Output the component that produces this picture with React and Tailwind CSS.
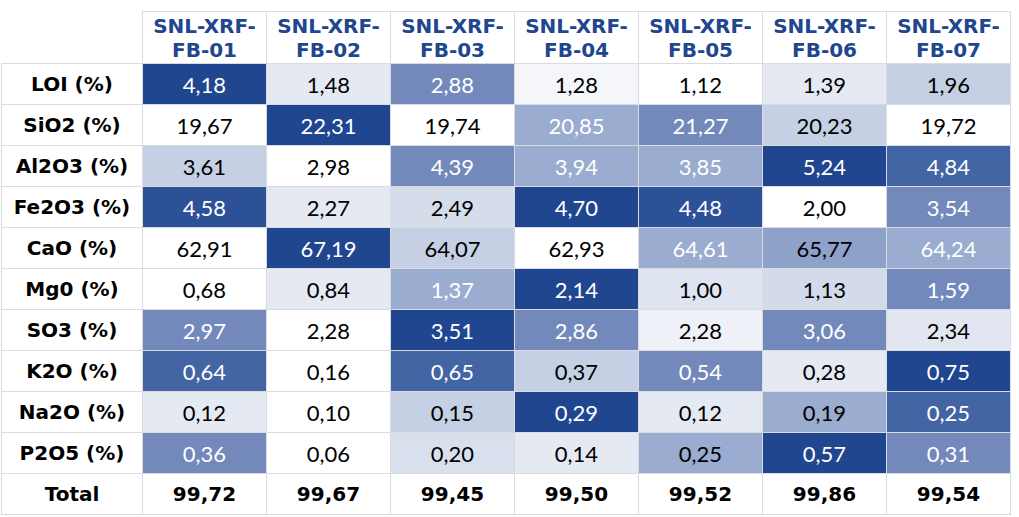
import React from 'react'

const D = 'bg-[#1f468f] text-white'
const DD = 'bg-[#2c5197] text-white'
const MD = 'bg-[#4465a4] text-white'
const M = 'bg-[#7389bb] text-white'
const MLw = 'bg-[#9aaccf] text-white'
const MLb = 'bg-[#9aaccf] text-black'
const L = 'bg-[#c5d0e4] text-black'
const VL = 'bg-[#e4e9f2] text-black'
const W = 'bg-white text-black'

const cols = ['01', '02', '03', '04', '05', '06', '07']

const rows = [
  ['LOI (%)', [['4,18', D], ['1,48', VL], ['2,88', M], ['1,28', 'bg-[#f4f6fa] text-black'], ['1,12', W], ['1,39', VL], ['1,96', L]]],
  ['SiO2 (%)', [['19,67', W], ['22,31', D], ['19,74', W], ['20,85', MLw], ['21,27', M], ['20,23', L], ['19,72', W]]],
  ['Al2O3 (%)', [['3,61', L], ['2,98', W], ['4,39', M], ['3,94', MLw], ['3,85', MLw], ['5,24', D], ['4,84', MD]]],
  ['Fe2O3 (%)', [['4,58', DD], ['2,27', VL], ['2,49', 'bg-[#d5dcea] text-black'], ['4,70', D], ['4,48', DD], ['2,00', W], ['3,54', M]]],
  ['CaO (%)', [['62,91', W], ['67,19', D], ['64,07', L], ['62,93', W], ['64,61', MLw], ['65,77', 'bg-[#8da1c9] text-black'], ['64,24', MLw]]],
  ['Mg0 (%)', [['0,68', W], ['0,84', VL], ['1,37', MLw], ['2,14', D], ['1,00', 'bg-[#dfe5f0] text-black'], ['1,13', 'bg-[#d3dbea] text-black'], ['1,59', M]]],
  ['SO3 (%)', [['2,97', M], ['2,28', W], ['3,51', D], ['2,86', M], ['2,28', 'bg-[#eef1f7] text-black'], ['3,06', M], ['2,34', 'bg-[#e1e6f0] text-black']]],
  ['K2O (%)', [['0,64', MD], ['0,16', W], ['0,65', MD], ['0,37', L], ['0,54', M], ['0,28', VL], ['0,75', D]]],
  ['Na2O (%)', [['0,12', VL], ['0,10', W], ['0,15', L], ['0,29', D], ['0,12', VL], ['0,19', MLb], ['0,25', MD]]],
  ['P2O5 (%)', [['0,36', M], ['0,06', W], ['0,20', 'bg-[#d9e0ed] text-black'], ['0,14', VL], ['0,25', MLb], ['0,57', D], ['0,31', M]]],
]

const totals = ['99,72', '99,67', '99,45', '99,50', '99,52', '99,86', '99,54']

const App = () => {
  return (
    <div className="w-[1019px] h-[517px] bg-white pt-[12px] pl-[1px]">
      <div className="grid grid-cols-[142px_repeat(7,124px)] grid-rows-[52px_repeat(11,41px)]">
        {/* Header */}
        <div />
        {cols.map((c) => (
          <div key={c} className="border border-[#d8dbe0] -ml-px -mt-px flex flex-col items-center justify-center text-[#1f468f] font-bold text-[20px] leading-[24px] font-['DejaVu_Sans',sans-serif]">
            <span>SNL-XRF-</span>
            <span>FB-{c}</span>
          </div>
        ))}

        {/* Body */}
        {rows.map(([label, cells]) => (
          <React.Fragment key={label}>
            <div className="border border-[#d8dbe0] -mt-px flex items-center justify-center font-bold text-[20px] text-black font-['DejaVu_Sans',sans-serif]">
              {label}
            </div>
            {cells.map(([v, cls], i) => (
              <div key={i} className={`border border-[#d8dbe0] -ml-px -mt-px flex items-center justify-center text-[22px] font-['Lato',sans-serif] ${cls}`}>
                {v}
              </div>
            ))}
          </React.Fragment>
        ))}

        {/* Total */}
        <div className="border border-[#d8dbe0] -mt-px flex items-center justify-center font-bold text-[20px] text-black font-['DejaVu_Sans',sans-serif]">
          Total
        </div>
        {totals.map((t, i) => (
          <div key={i} className="border border-[#d8dbe0] -ml-px -mt-px flex items-center justify-center font-bold text-[20px] text-black font-['DejaVu_Sans',sans-serif]">
            {t}
          </div>
        ))}
      </div>
    </div>
  )
}

export default App
